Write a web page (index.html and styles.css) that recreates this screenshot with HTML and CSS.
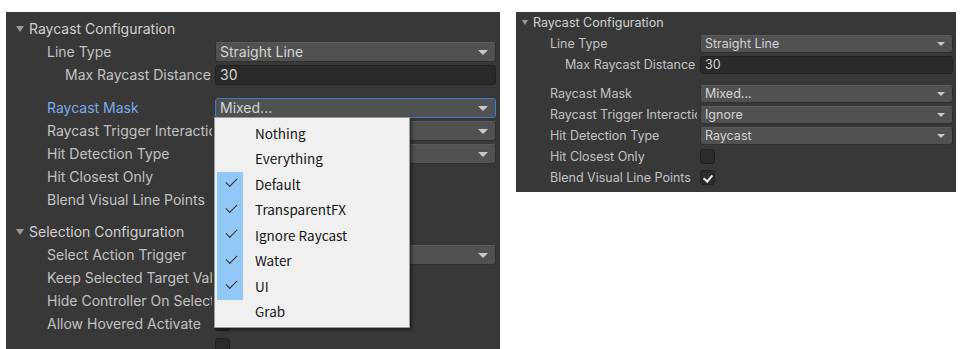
FILE: index.html
```html
<!DOCTYPE html>
<html>
<head>
<meta charset="utf-8">
<link rel="stylesheet" href="styles.css">
</head>
<body>
<div class="stage">
  <div class="panel big">
    <div class="hdr"><span class="tri"></span>Raycast Configuration</div>
    <div class="row"><div class="lbl">Line Type</div><div class="dd">Straight Line</div></div>
    <div class="row"><div class="lbl ind2">Max Raycast Distance</div><div class="tf">30</div></div>
    <div class="row gap-before"><div class="lbl focus">Raycast Mask</div><div class="dd active">Mixed...</div></div>
    <div class="row"><div class="lbl">Raycast Trigger Interaction</div><div class="dd">Ignore</div></div>
    <div class="row"><div class="lbl">Hit Detection Type</div><div class="dd">Raycast</div></div>
    <div class="row"><div class="lbl">Hit Closest Only</div><div class="cb"></div></div>
    <div class="row"><div class="lbl">Blend Visual Line Points</div><div class="cb on"></div></div>
    <div class="hdr gap-before2"><span class="tri"></span>Selection Configuration</div>
    <div class="row"><div class="lbl">Select Action Trigger</div><div class="dd">State Change</div></div>
    <div class="row"><div class="lbl">Keep Selected Target Valid</div><div class="cb on"></div></div>
    <div class="row"><div class="lbl">Hide Controller On Select</div><div class="cb"></div></div>
    <div class="row"><div class="lbl">Allow Hovered Activate</div><div class="cb"></div></div>
    <div class="row last"><div class="lbl"></div><div class="cb"></div></div>

    <div class="popup">
      <div class="checkcol"></div>
      <div class="item">Nothing</div>
      <div class="item">Everything</div>
      <div class="item checked">Default</div>
      <div class="item checked">TransparentFX</div>
      <div class="item checked">Ignore Raycast</div>
      <div class="item checked">Water</div>
      <div class="item checked">UI</div>
      <div class="item">Grab</div>
    </div>
  </div>

  <div class="panel small">
    <div class="hdr"><span class="tri"></span>Raycast Configuration</div>
    <div class="row"><div class="lbl">Line Type</div><div class="dd">Straight Line</div></div>
    <div class="row"><div class="lbl ind2">Max Raycast Distance</div><div class="tf">30</div></div>
    <div class="row gap-before"><div class="lbl">Raycast Mask</div><div class="dd">Mixed...</div></div>
    <div class="row"><div class="lbl">Raycast Trigger Interaction</div><div class="dd">Ignore</div></div>
    <div class="row"><div class="lbl">Hit Detection Type</div><div class="dd">Raycast</div></div>
    <div class="row"><div class="lbl">Hit Closest Only</div><div class="cb"></div></div>
    <div class="row"><div class="lbl">Blend Visual Line Points</div><div class="cb on"></div></div>
  </div>
</div>
</body>
</html>
```
FILE: styles.css
```css
* { box-sizing: border-box; }
html, body { margin: 0; padding: 0; background: #ffffff; }
body { width: 965px; height: 349px; overflow: hidden; }

.stage {
  display: flex;
  align-items: flex-start;
  padding: 12px 0 0 6px;
  gap: 16px;
}

.panel {
  position: relative;
  background: #383838;
  font-family: Inter, "Noto Sans", sans-serif;
  color: #c2c2c2;
}

.panel.big {
  width: 494px;
  height: 337px;
  padding-top: 5px;
  font-size: 14px;
  --row: 23px;
  --lblw: 206px;
  --ind1: 41px;
  --ind2: 59px;
  --fh: 20px;
  --fr: 4px;
  --hpad: 10px;
  --tri: 4px;
  --tripad: 5px;
}

.panel.small {
  width: 440px;
  padding-top: 0;
  padding-bottom: 4px;
  font-size: 12.5px;
  --row: 21px;
  --lblw: 181px;
  --ind1: 34px;
  --ind2: 49px;
  --fh: 18px;
  --fr: 3px;
  --hpad: 6px;
  --tri: 3.5px;
  --tripad: 5px;
}

.hdr {
  height: var(--row);
  display: flex;
  align-items: center;
  padding-left: var(--hpad);
  color: #d0d0d0;
}
.tri {
  width: 0; height: 0;
  border-left: var(--tri) solid transparent;
  border-right: var(--tri) solid transparent;
  border-top: calc(var(--tri) * 1.6) solid #9b9b9b;
  margin-right: var(--tripad);
}

.row {
  height: var(--row);
  display: flex;
  align-items: center;
}
.big .gap-before { margin-top: 10px; }
.big .gap-before2 { margin-top: 9px; }
.small .gap-before { margin-top: 8px; }
.row.last { align-items: flex-start; padding-top: 3px; }

.lbl {
  width: var(--lblw);
  flex: none;
  padding-left: var(--ind1);
  white-space: nowrap;
  overflow: hidden;
  padding-right: 3px;
}
.lbl.ind2 { padding-left: var(--ind2); }
.lbl.focus { color: #7aabeb; }

.dd, .tf {
  flex: 1;
  height: var(--fh);
  margin-right: var(--fr);
  margin-left: 3px;
  border-radius: 3px;
  display: flex;
  align-items: center;
  padding-left: 4px;
  color: #d4d4d4;
  position: relative;
}
.dd {
  background: #515151;
  border: 1px solid #303030;
  border-top-color: #5a5a5a;
}
.dd::after {
  content: "";
  position: absolute;
  right: 7px;
  top: 50%;
  margin-top: -2px;
  border-left: 5px solid transparent;
  border-right: 5px solid transparent;
  border-top: 5px solid #c8c8c8;
}
.small .dd::after {
  border-left-width: 4.5px;
  border-right-width: 4.5px;
  border-top-width: 4.5px;
}
.dd.active { border: 1px solid #3b7cc4; }

.tf {
  background: #2a2a2a;
  border: 1px solid #212121;
}

.cb {
  width: 15px;
  height: 15px;
  margin-left: 3px;
  background: #2b2b2b;
  border: 1px solid #202020;
  border-radius: 3px;
  position: relative;
}
.cb.on::after {
  content: "";
  position: absolute;
  left: 3.5px;
  top: 2px;
  width: 4px;
  height: 7px;
  border-right: 2px solid #e8e8e8;
  border-bottom: 2px solid #e8e8e8;
  transform: rotate(40deg);
}

.popup {
  position: absolute;
  left: 208px;
  top: 105px;
  width: 196px;
  height: 211px;
  background: #f0f0f0;
  border: 1px solid #9a9a9a;
  box-shadow: 2px 2px 3px rgba(0,0,0,0.45);
  padding: 2px 3px 3px 2px;
  font-family: "Noto Sans CJK KR", "Noto Sans", sans-serif;
  font-size: 13.5px;
  color: #141414;
}
.checkcol {
  position: absolute;
  left: 2px;
  top: 54px;
  width: 26px;
  height: 127.5px;
  background: #92c8f7;
}
.item {
  position: relative;
  height: 25.5px;
  display: flex;
  align-items: center;
  padding-left: 38px;
}
.item.checked::before {
  content: "";
  position: absolute;
  left: 9px;
  top: 7px;
  width: 10px;
  height: 5px;
  border-left: 1.6px solid #2c2c2c;
  border-bottom: 1.6px solid #2c2c2c;
  transform: rotate(-45deg);
}
```
